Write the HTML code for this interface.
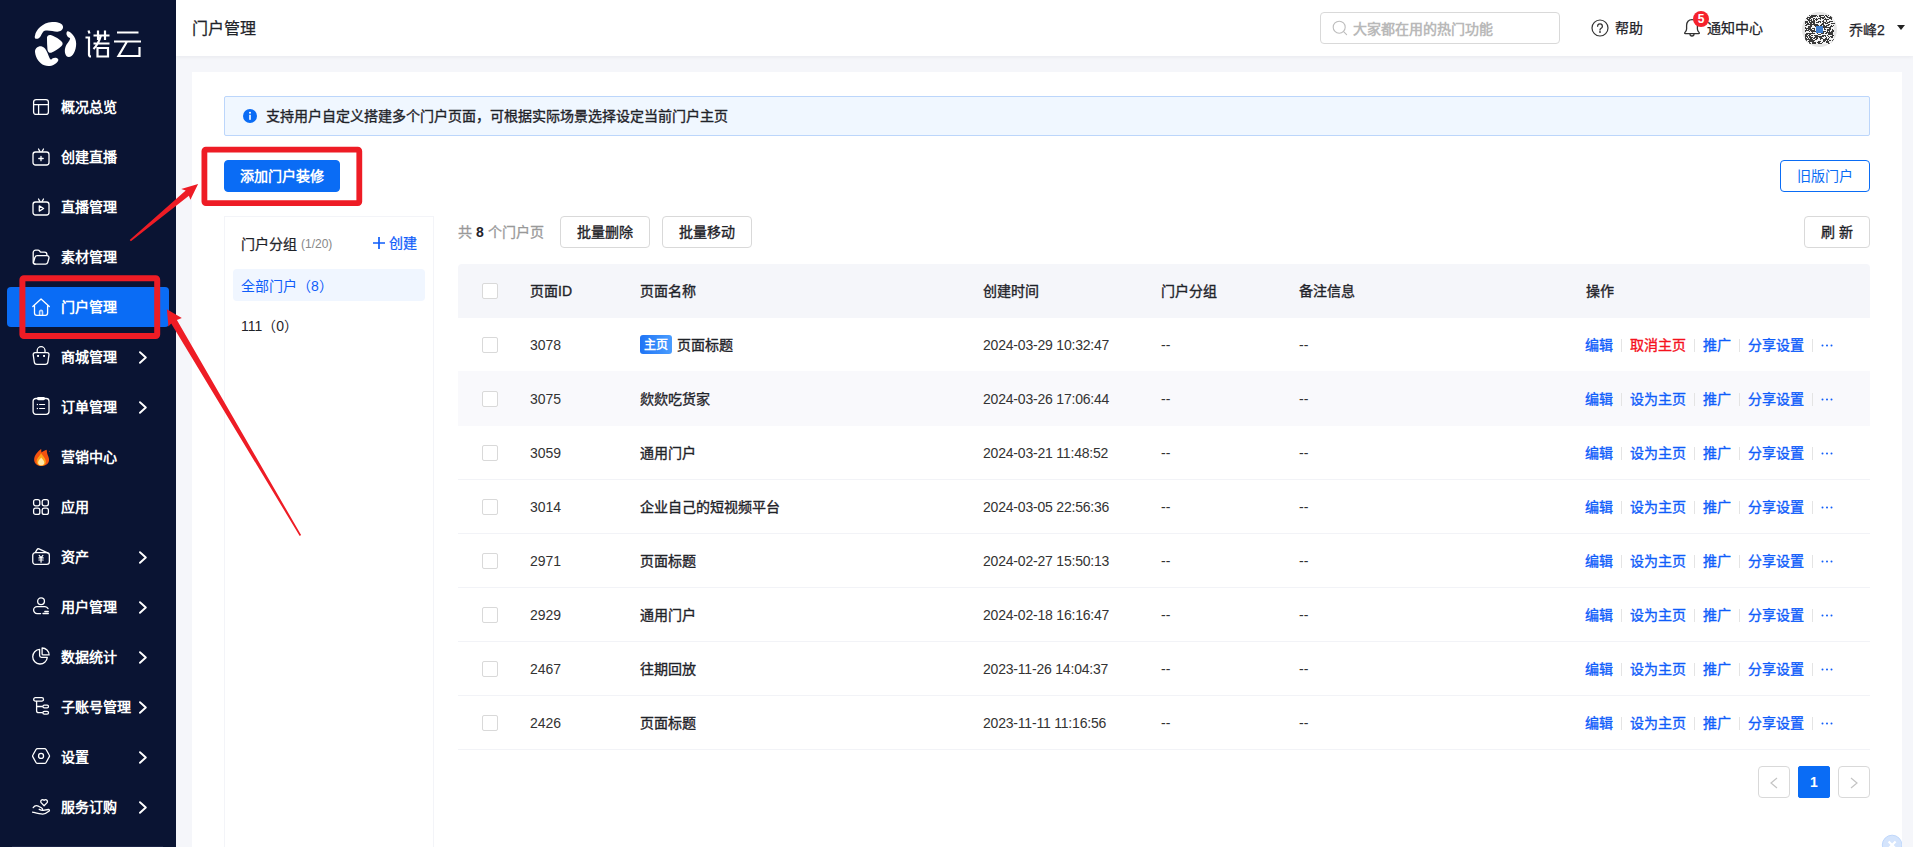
<!DOCTYPE html>
<html lang="zh-CN">
<head>
<meta charset="utf-8">
<title>门户管理</title>
<style>
*{box-sizing:border-box;margin:0;padding:0}
html,body{width:1913px;height:847px;overflow:hidden;background:#f5f6fa;font-family:"Liberation Sans",sans-serif;font-size:14px;color:#1f2329}
.abs{position:absolute}
#side{position:absolute;left:0;top:0;width:176px;height:847px;background:#0a1433;overflow:hidden}
.mi{position:absolute;left:7px;width:162px;height:40px;border-radius:4px;color:#fff;font-weight:bold;font-size:14px;line-height:40px;white-space:nowrap}
.mi.on{background:#0a6cf5}
.mi svg.ic{overflow:visible;position:absolute;left:25px;top:11px;width:18px;height:18px}
.mi span{position:absolute;left:54px;top:0}
.mi svg.ch{position:absolute;left:131px;top:14px;width:10px;height:13px}
#top{position:absolute;left:176px;top:0;width:1737px;height:56px;background:#fff;box-shadow:0 1px 4px rgba(0,21,41,.06)}
#card{position:absolute;left:192px;top:72px;width:1710px;height:775px;background:#fff}
.t{position:absolute;white-space:nowrap;line-height:20px}
.btn{position:absolute;height:32px;border:1px solid #d9d9d9;border-radius:4px;background:#fff;text-align:center;line-height:30px;font-size:14px;color:#1f2329;white-space:nowrap;overflow:hidden}
.row{position:absolute;left:458px;width:1412px;height:54px;border-bottom:1px solid #f2f3f7}
.row .t{top:17px}
.cb{position:absolute;left:24px;top:19px;width:16px;height:16px;border:1px solid #d9d9d9;border-radius:2px;background:#fff}
.lk{color:#0f5dfa;-webkit-text-stroke:.35px #0f5dfa}
.md{-webkit-text-stroke:.35px #1f2329}
.sep{position:absolute;top:21px;width:1px;height:13px;background:#e4e4e4}
</style>
</head>
<body>
<div id="side">
<svg class="abs" style="left:28px;top:14px" width="60" height="60" viewBox="0 0 847 847"><g fill="#fff">
<path d="M100 300C110 230 200 120 340 112C420 108 495 130 495 185C495 230 450 252 410 250C360 248 300 225 235 235C215 240 200 270 180 310C160 345 120 360 102 345C92 335 95 315 100 300Z"/>
<path d="M560 245C600 250 680 320 680 420C680 520 630 610 575 608C530 606 510 540 525 480C540 420 590 390 595 340C560 330 535 290 545 260C548 250 553 245 560 245Z"/>
<path d="M100 545C90 490 140 450 195 458C245 468 275 540 295 600C305 625 315 640 325 645C345 615 400 605 425 635C440 660 400 700 370 712C330 735 280 740 230 725C160 700 108 620 100 545Z"/>
<path d="M268 350C262 310 290 290 330 300C380 315 450 360 480 395C495 415 490 440 470 455C430 490 370 530 335 545C300 555 280 535 275 500C268 450 270 400 268 350Z"/>
</g></svg>
<svg class="abs" style="left:84px;top:29px" width="58" height="30" viewBox="0 0 58 30" fill="none" stroke="#fff" stroke-width="2.2" stroke-linecap="butt" stroke-linejoin="miter">
<path d="M1.5 8.5h3.5V25.5a2 2 0 0 0 2 2M4.5 1.5l1 3"/>
<path d="M9.5 6.5h16M14 1.5v9.5M21 1.5v9.5M9.5 14.5h16M17 6.5C15 13 12.5 17 9.5 20M13.5 19v8.5h10.5V19z"/>
<path d="M33 3.5h21.5M30 12.5h27M43 12.5L34.5 27H55.5V18"/>
</svg>
<div class="mi" style="top:87px"><svg class="ic" viewBox="0 0 18 18"><rect x="1.6" y="1.6" width="14.8" height="14.8" rx="2.5" stroke="#fff" stroke-width="1.3" fill="none" stroke-linecap="round" stroke-linejoin="round"/><path d="M1.6 6.6H16.4M6.6 6.6V16.4" stroke="#fff" stroke-width="1.3" fill="none" stroke-linecap="round" stroke-linejoin="round"/></svg><span>概况总览</span></div>
<div class="mi" style="top:137px"><svg class="ic" viewBox="0 0 18 18"><rect x="1" y="4" width="16" height="13" rx="2.5" stroke="#fff" stroke-width="1.3" fill="none" stroke-linecap="round" stroke-linejoin="round"/><path d="M6.5 1L8 3.6M11.5 1L10 3.6M9 8.3v4.4M6.8 10.5h4.4" stroke="#fff" stroke-width="1.3" fill="none" stroke-linecap="round" stroke-linejoin="round"/></svg><span>创建直播</span></div>
<div class="mi" style="top:187px"><svg class="ic" viewBox="0 0 18 18"><rect x="1" y="4" width="16" height="13" rx="2.5" stroke="#fff" stroke-width="1.3" fill="none" stroke-linecap="round" stroke-linejoin="round"/><path d="M6.5 1L8 3.6M11.5 1L10 3.6M7.3 7.9v5.2l4.3-2.6z" stroke="#fff" stroke-width="1.3" fill="none" stroke-linecap="round" stroke-linejoin="round"/></svg><span>直播管理</span></div>
<div class="mi" style="top:237px"><svg class="ic" viewBox="0 0 18 18"><path d="M14.9 7.4V6.6a2.4 2.4 0 0 0-2.4-2.4H9.3a1.5 1.5 0 0 1-1.1-.5L7.4 2.8a1.8 1.8 0 0 0-1.3-.6H3.6a2.4 2.4 0 0 0-2.4 2.4V14a2.1 2.1 0 0 0 2.1 2.1" stroke="#fff" stroke-width="1.3" fill="none" stroke-linecap="round" stroke-linejoin="round"/><path d="M3.3 16.1H13.6a2.2 2.2 0 0 0 2.1-1.6l1.2-4.2a2.1 2.1 0 0 0-2-2.7H5.2a2.3 2.3 0 0 0-2.2 1.7L1.5 14.2a1.5 1.5 0 0 0 1.8 1.9z" stroke="#fff" stroke-width="1.3" fill="none" stroke-linecap="round" stroke-linejoin="round"/></svg><span>素材管理</span></div>
<div class="mi on" style="top:287px"><svg class="ic" viewBox="0 0 18 18"><path d="M0.8 8.5L9.05 0.9 17.3 8.5M2.5 7.4V15a2.3 2.3 0 0 0 2.3 2.3H13.3a2.3 2.3 0 0 0 2.3-2.3V7.4" stroke="#fff" stroke-width="1.3" fill="none" stroke-linecap="round" stroke-linejoin="round"/><path d="M7.6 17.2V13.8a1.45 1.45 0 0 1 2.9 0V17.2" stroke="#fff" stroke-opacity=".75" stroke-width="1.6" fill="none"/></svg><span>门户管理</span></div>
<div class="mi" style="top:337px"><svg class="ic" viewBox="0 0 18 18"><path d="M3 4.6H15.2a1.8 1.8 0 0 1 1.8 2L15.9 14a2.6 2.6 0 0 1-2.6 2.4H4.9a2.6 2.6 0 0 1-2.6-2.4L1.2 6.6a1.8 1.8 0 0 1 1.8-2z" stroke="#fff" stroke-width="1.3" fill="none" stroke-linecap="round" stroke-linejoin="round"/><path d="M5.2 4.4V2.6a3.9 3.9 0 0 1 7.8 0V4.4" stroke="#fff" stroke-width="1.3" fill="none" stroke-linecap="round" stroke-linejoin="round"/><rect x="5.1" y="7" width="1.9" height="1.9" fill="#fff"/><rect x="11.1" y="7" width="1.9" height="1.9" fill="#fff"/></svg><span>商城管理</span><svg class="ch" viewBox="0 0 10 13"><path d="M2 1.2L7.8 6.5 2 11.8" stroke="#fff" stroke-width="1.9" fill="none" stroke-linecap="round" stroke-linejoin="round"/></svg></div>
<div class="mi" style="top:387px"><svg class="ic" viewBox="0 0 18 18"><rect x="1.1" y="0.5" width="15.9" height="15.9" rx="2.8" stroke="#fff" stroke-width="1.3" fill="none" stroke-linecap="round" stroke-linejoin="round"/><rect x="5" y="-0.9" width="8" height="3.1" rx="1.4" fill="#fff"/><path d="M7.6 6.5h5M7.6 10.5h5" stroke="#fff" stroke-width="1.2" fill="none" stroke-linecap="round"/><rect x="4.8" y="5.9" width="1.2" height="1.2" fill="#fff"/><rect x="4.8" y="9.9" width="1.2" height="1.2" fill="#fff"/></svg><span>订单管理</span><svg class="ch" viewBox="0 0 10 13"><path d="M2 1.2L7.8 6.5 2 11.8" stroke="#fff" stroke-width="1.9" fill="none" stroke-linecap="round" stroke-linejoin="round"/></svg></div>
<div class="mi" style="top:437px"><svg class="ic" viewBox="0 0 18 18"><path d="M9.2 1C7.5 2 3 6 2.2 10.5C1.6 14.5 4.5 18 9.4 18C14.5 18 17.5 14.8 17 11C16.6 8 15.2 6.5 15 4.5C14.9 3.2 14.9 2.4 14.5 1.7C13 2 10.5 3.5 9.4 4.6C9.2 3.5 9.4 2 9.2 1Z" fill="#f4520f"/><path d="M9 5C8.5 7.5 5 9.5 4.6 13C4.3 16 6.5 17.8 9.3 17.8C12.3 17.8 14.2 15.8 13.8 13C13.4 10 11 8 9.6 6Z" fill="#ffa31a"/><path d="M9.2 9.5C8.6 11 6.2 12 6.1 14.4C6 16.2 7.5 17.3 9.2 17.3C11 17.3 12.4 16.2 12.3 14.4C12.2 12.3 10 11 9.2 9.5Z" fill="#ffe9a8"/><circle cx="17.4" cy="3.3" r=".5" fill="#c43a12"/></svg><span>营销中心</span></div>
<div class="mi" style="top:487px"><svg class="ic" viewBox="0 0 18 18"><rect x="1.6" y="1.6" width="6.2" height="6.2" rx="2" stroke="#fff" stroke-width="1.3" fill="none" stroke-linecap="round" stroke-linejoin="round"/><rect x="10.2" y="1.6" width="6.2" height="6.2" rx="2" stroke="#fff" stroke-width="1.3" fill="none" stroke-linecap="round" stroke-linejoin="round"/><rect x="1.6" y="10.2" width="6.2" height="6.2" rx="2" stroke="#fff" stroke-width="1.3" fill="none" stroke-linecap="round" stroke-linejoin="round"/><rect x="10.2" y="10.2" width="6.2" height="6.2" rx="2" stroke="#fff" stroke-width="1.3" fill="none" stroke-linecap="round" stroke-linejoin="round"/></svg><span>应用</span></div>
<div class="mi" style="top:537px"><svg class="ic" viewBox="0 0 18 18"><rect x="0.75" y="4.6" width="16.6" height="11.8" rx="2.6" stroke="#fff" stroke-width="1.3" fill="none" stroke-linecap="round" stroke-linejoin="round"/><path d="M3.4 4.4L5 1.6a1.6 1.6 0 0 1 2-.7L15.6 4.8" stroke="#fff" stroke-width="1.3" fill="none" stroke-linecap="round" stroke-linejoin="round"/><path d="M7.2 7.4L9.05 9.6 10.9 7.4M9.05 9.6V14.2M6.9 9.9h4.3M6.9 12h4.3" stroke="#fff" stroke-width="1.2" fill="none" stroke-linecap="round"/></svg><span>资产</span><svg class="ch" viewBox="0 0 10 13"><path d="M2 1.2L7.8 6.5 2 11.8" stroke="#fff" stroke-width="1.9" fill="none" stroke-linecap="round" stroke-linejoin="round"/></svg></div>
<div class="mi" style="top:587px"><svg class="ic" viewBox="0 0 18 18"><circle cx="9.05" cy="3.3" r="3.4" stroke="#fff" stroke-width="1.3" fill="none" stroke-linecap="round" stroke-linejoin="round"/><path d="M16 10.6a3.4 3.4 0 0 0-3-2H5.1a3.5 3.5 0 0 0 0 7H8.6M12.8 13.5H16.3M11 15.5H16.3" stroke="#fff" stroke-width="1.3" fill="none" stroke-linecap="round" stroke-linejoin="round"/></svg><span>用户管理</span><svg class="ch" viewBox="0 0 10 13"><path d="M2 1.2L7.8 6.5 2 11.8" stroke="#fff" stroke-width="1.9" fill="none" stroke-linecap="round" stroke-linejoin="round"/></svg></div>
<div class="mi" style="top:637px"><svg class="ic" viewBox="0 0 18 18"><path d="M7.6 1.4A7.3 7.3 0 1 0 15.3 9.4H9.4a1.8 1.8 0 0 1-1.8-1.8z" stroke="#fff" stroke-width="1.3" fill="none" stroke-linecap="round" stroke-linejoin="round"/><path d="M10.1 0a7 7 0 0 1 7 6.9H11.1a1 1 0 0 1-1-1z" stroke="#fff" stroke-width="1.3" fill="none" stroke-linecap="round" stroke-linejoin="round"/></svg><span>数据统计</span><svg class="ch" viewBox="0 0 10 13"><path d="M2 1.2L7.8 6.5 2 11.8" stroke="#fff" stroke-width="1.9" fill="none" stroke-linecap="round" stroke-linejoin="round"/></svg></div>
<div class="mi" style="top:687px"><svg class="ic" viewBox="0 0 18 18"><rect x="1.7" y="-0.3" width="9.8" height="3.4" rx="1.7" stroke="#fff" stroke-width="1.3" fill="none" stroke-linecap="round" stroke-linejoin="round"/><rect x="10.9" y="7.2" width="5.6" height="2.7" rx="1.35" stroke="#fff" stroke-width="1.3" fill="none" stroke-linecap="round" stroke-linejoin="round"/><rect x="10.9" y="13.4" width="5.6" height="2.8" rx="1.4" stroke="#fff" stroke-width="1.3" fill="none" stroke-linecap="round" stroke-linejoin="round"/><path d="M4.6 3.3v9.4a2 2 0 0 0 2 2h3.7M4.6 8.5h5.7" stroke="#fff" stroke-width="1.3" fill="none" stroke-linecap="round" stroke-linejoin="round"/></svg><span>子账号管理</span><svg class="ch" viewBox="0 0 10 13"><path d="M2 1.2L7.8 6.5 2 11.8" stroke="#fff" stroke-width="1.9" fill="none" stroke-linecap="round" stroke-linejoin="round"/></svg></div>
<div class="mi" style="top:737px"><svg class="ic" viewBox="0 0 18 18"><path d="M5.6 0.55H12.5a1.8 1.8 0 0 1 1.6.9L17.2 7a1.8 1.8 0 0 1 0 1.9L14.1 14.5a1.8 1.8 0 0 1-1.6.9H5.6a1.8 1.8 0 0 1-1.6-.9L0.9 8.9a1.8 1.8 0 0 1 0-1.9L4 1.45a1.8 1.8 0 0 1 1.6-.9z" stroke="#fff" stroke-width="1.3" fill="none" stroke-linecap="round" stroke-linejoin="round"/><circle cx="9.05" cy="7.95" r="2.5" stroke="#fff" stroke-width="1.3" fill="none" stroke-linecap="round" stroke-linejoin="round"/></svg><span>设置</span><svg class="ch" viewBox="0 0 10 13"><path d="M2 1.2L7.8 6.5 2 11.8" stroke="#fff" stroke-width="1.9" fill="none" stroke-linecap="round" stroke-linejoin="round"/></svg></div>
<div class="mi" style="top:787px"><svg class="ic" viewBox="0 0 18 18"><path d="M12.1 7.7L9.3 4.9a1.9 1.9 0 0 1 2.7-2.7l.1.1.1-.1a1.9 1.9 0 0 1 2.7 2.7z" stroke="#fff" stroke-width="1.3" fill="none" stroke-linecap="round" stroke-linejoin="round"/><path d="M1.2 9.6C2.6 7.6 4.8 7.4 6.4 8.2L9.4 9.8C10.4 10.4 10.8 11.2 10.6 12" stroke="#fff" stroke-width="1.3" fill="none" stroke-linecap="round" stroke-linejoin="round"/><path d="M7.2 11.3C8.4 11.9 9.6 12.4 11 12.3L16.4 11.5a.9.9 0 0 1 .8 1.5C15.2 14.6 13 16 10.8 16.1C8 16.2 4 15 0.6 14.1" stroke="#fff" stroke-width="1.3" fill="none" stroke-linecap="round" stroke-linejoin="round"/></svg><span>服务订购</span><svg class="ch" viewBox="0 0 10 13"><path d="M2 1.2L7.8 6.5 2 11.8" stroke="#fff" stroke-width="1.9" fill="none" stroke-linecap="round" stroke-linejoin="round"/></svg></div>
<div class="abs" style="left:12px;top:846px;width:151px;height:1px;background:#1c2446"></div>
</div>
<div id="top">
<div class="t" style="left:16px;top:19px;font-size:16px;color:#1f2329;line-height:20px;font-weight:normal;-webkit-text-stroke:.25px #1f2329">门户管理</div>
<div class="abs" style="left:1144px;top:12px;width:240px;height:32px;border:1px solid #d9d9d9;border-radius:4px;background:#fff"></div>
<svg class="abs" style="left:1156px;top:20px" width="16" height="16" viewBox="0 0 16 16"><circle cx="7.2" cy="7.2" r="6" stroke="#bdbdbd" stroke-width="1.1" fill="none"/><path d="M11.6 11.6l3 3" stroke="#bdbdbd" stroke-width="1.1" stroke-linecap="round"/></svg>
<div class="t" style="left:1177px;top:19px;color:#b9b9b9;font-weight:bold">大家都在用的热门功能</div>
<svg class="abs" style="left:1415px;top:19px" width="18" height="18" viewBox="0 0 18 18"><circle cx="9" cy="9" r="8" stroke="#333" stroke-width="1.2" fill="none"/><path d="M6.6 7.2a2.4 2.4 0 1 1 3.6 2.1c-.8.5-1.2.9-1.2 1.7" stroke="#333" stroke-width="1.3" fill="none" stroke-linecap="round"/><circle cx="9" cy="13" r=".9" fill="#333"/></svg>
<div class="t" style="left:1439px;top:18px;color:#1f2329;font-weight:normal;-webkit-text-stroke:.25px #1f2329">帮助</div>
<svg class="abs" style="left:1507px;top:18px" width="18" height="20" viewBox="0 0 18 20"><path d="M9 1.6C5.6 1.6 3.6 4.2 3.6 7.4V11C3.6 12.8 2.6 13.8 1.8 14.6C1.4 15 1.6 15.7 2.3 15.7H15.7C16.4 15.7 16.6 15 16.2 14.6C15.4 13.8 14.4 12.8 14.4 11V7.4C14.4 4.2 12.4 1.6 9 1.6Z" stroke="#333" stroke-width="1.3" fill="none" stroke-linejoin="round"/><path d="M7 16a2 2 0 0 0 4 0" stroke="#333" stroke-width="1.3" fill="none"/></svg>
<div class="abs" style="left:1517px;top:11px;width:16px;height:16px;border-radius:8px;background:#f5222d;color:#fff;font-size:12px;font-weight:bold;line-height:16px;text-align:center">5</div>
<div class="t" style="left:1531px;top:18px;color:#1f2329;font-weight:normal;-webkit-text-stroke:.25px #1f2329">通知中心</div>
<svg class="abs" style="left:1626px;top:12px" width="35" height="35" viewBox="0 0 35 35"><defs><clipPath id="av"><circle cx="17.5" cy="17.5" r="17.5"/></clipPath></defs><g clip-path="url(#av)"><rect width="35" height="35" fill="#e6e6e6"/><rect x="3" y="3" width="29" height="29" fill="#f4f4f4"/><path fill="#3a3a3a" d="M7 3h1v1h-1zM9 3h1v1h-1zM10 3h2v1h-2zM12 3h1v1h-1zM13 3h2v1h-2zM17 3h2v1h-2zM19 3h1v1h-1zM20 3h1v1h-1zM21 3h1v1h-1zM23 3h1v1h-1zM24 3h1v1h-1zM26 3h1v1h-1zM31 3h2v1h-2zM4 4h1v1h-1zM5 4h1v1h-1zM8 4h1v1h-1zM9 4h2v1h-2zM11 4h1v1h-1zM12 4h2v1h-2zM15 4h1v1h-1zM17 4h2v1h-2zM22 4h1v1h-1zM24 4h2v1h-2zM28 4h1v1h-1zM29 4h2v1h-2zM31 4h1v1h-1zM5 5h2v1h-2zM7 5h2v1h-2zM9 5h2v1h-2zM18 5h1v1h-1zM19 5h1v1h-1zM20 5h1v1h-1zM21 5h1v1h-1zM22 5h1v1h-1zM25 5h1v1h-1zM26 5h2v1h-2zM28 5h2v1h-2zM30 5h2v1h-2zM4 6h2v1h-2zM7 6h1v1h-1zM8 6h1v1h-1zM11 6h2v1h-2zM14 6h1v1h-1zM16 6h2v1h-2zM18 6h1v1h-1zM20 6h1v1h-1zM21 6h1v1h-1zM23 6h1v1h-1zM27 6h1v1h-1zM28 6h1v1h-1zM29 6h1v1h-1zM5 7h1v1h-1zM6 7h2v1h-2zM9 7h1v1h-1zM11 7h1v1h-1zM13 7h1v1h-1zM14 7h1v1h-1zM15 7h1v1h-1zM18 7h1v1h-1zM22 7h1v1h-1zM23 7h1v1h-1zM24 7h1v1h-1zM25 7h2v1h-2zM29 7h1v1h-1zM6 8h1v1h-1zM7 8h1v1h-1zM8 8h1v1h-1zM9 8h1v1h-1zM11 8h1v1h-1zM12 8h1v1h-1zM14 8h1v1h-1zM21 8h1v1h-1zM24 8h1v1h-1zM3 9h1v1h-1zM4 9h1v1h-1zM5 9h1v1h-1zM7 9h1v1h-1zM9 9h2v1h-2zM11 9h2v1h-2zM16 9h1v1h-1zM17 9h2v1h-2zM20 9h2v1h-2zM24 9h1v1h-1zM27 9h1v1h-1zM28 9h2v1h-2zM30 9h1v1h-1zM3 10h2v1h-2zM5 10h1v1h-1zM7 10h1v1h-1zM8 10h2v1h-2zM10 10h1v1h-1zM11 10h1v1h-1zM12 10h1v1h-1zM14 10h1v1h-1zM15 10h1v1h-1zM16 10h1v1h-1zM18 10h1v1h-1zM21 10h1v1h-1zM22 10h1v1h-1zM23 10h1v1h-1zM25 10h1v1h-1zM26 10h1v1h-1zM27 10h1v1h-1zM3 11h1v1h-1zM5 11h1v1h-1zM6 11h1v1h-1zM8 11h1v1h-1zM9 11h1v1h-1zM11 11h1v1h-1zM12 11h1v1h-1zM20 11h1v1h-1zM21 11h1v1h-1zM23 11h1v1h-1zM24 11h1v1h-1zM25 11h1v1h-1zM29 11h1v1h-1zM30 11h1v1h-1zM31 11h2v1h-2zM4 12h1v1h-1zM5 12h1v1h-1zM6 12h1v1h-1zM7 12h2v1h-2zM9 12h1v1h-1zM10 12h1v1h-1zM11 12h1v1h-1zM12 12h1v1h-1zM13 12h1v1h-1zM14 12h1v1h-1zM15 12h1v1h-1zM19 12h2v1h-2zM21 12h1v1h-1zM26 12h1v1h-1zM27 12h1v1h-1zM3 13h1v1h-1zM4 13h1v1h-1zM8 13h2v1h-2zM12 13h1v1h-1zM13 13h2v1h-2zM15 13h2v1h-2zM18 13h1v1h-1zM19 13h1v1h-1zM21 13h1v1h-1zM22 13h1v1h-1zM24 13h2v1h-2zM26 13h1v1h-1zM29 13h1v1h-1zM31 13h1v1h-1zM6 14h2v1h-2zM8 14h1v1h-1zM9 14h1v1h-1zM13 14h1v1h-1zM14 14h2v1h-2zM16 14h1v1h-1zM19 14h2v1h-2zM21 14h1v1h-1zM22 14h2v1h-2zM24 14h1v1h-1zM28 14h1v1h-1zM29 14h1v1h-1zM30 14h1v1h-1zM3 15h1v1h-1zM6 15h1v1h-1zM7 15h1v1h-1zM8 15h1v1h-1zM16 15h2v1h-2zM19 15h1v1h-1zM20 15h1v1h-1zM21 15h2v1h-2zM23 15h1v1h-1zM24 15h1v1h-1zM25 15h1v1h-1zM26 15h2v1h-2zM28 15h1v1h-1zM3 16h2v1h-2zM5 16h1v1h-1zM6 16h1v1h-1zM7 16h1v1h-1zM8 16h1v1h-1zM10 16h2v1h-2zM12 16h1v1h-1zM14 16h2v1h-2zM16 16h1v1h-1zM17 16h1v1h-1zM18 16h1v1h-1zM19 16h2v1h-2zM22 16h1v1h-1zM27 16h2v1h-2zM4 17h1v1h-1zM6 17h2v1h-2zM8 17h1v1h-1zM9 17h1v1h-1zM12 17h1v1h-1zM15 17h1v1h-1zM16 17h1v1h-1zM17 17h1v1h-1zM19 17h1v1h-1zM22 17h1v1h-1zM23 17h1v1h-1zM25 17h1v1h-1zM26 17h1v1h-1zM27 17h2v1h-2zM30 17h1v1h-1zM3 18h2v1h-2zM5 18h2v1h-2zM8 18h1v1h-1zM9 18h1v1h-1zM10 18h1v1h-1zM11 18h1v1h-1zM12 18h1v1h-1zM15 18h1v1h-1zM18 18h1v1h-1zM19 18h1v1h-1zM20 18h1v1h-1zM25 18h1v1h-1zM26 18h2v1h-2zM30 18h1v1h-1zM31 18h1v1h-1zM3 19h1v1h-1zM7 19h1v1h-1zM9 19h2v1h-2zM11 19h2v1h-2zM13 19h2v1h-2zM16 19h2v1h-2zM18 19h2v1h-2zM20 19h2v1h-2zM22 19h1v1h-1zM23 19h1v1h-1zM25 19h1v1h-1zM27 19h1v1h-1zM29 19h1v1h-1zM30 19h1v1h-1zM31 19h1v1h-1zM10 20h1v1h-1zM14 20h2v1h-2zM16 20h1v1h-1zM19 20h1v1h-1zM20 20h1v1h-1zM21 20h1v1h-1zM24 20h1v1h-1zM25 20h1v1h-1zM26 20h2v1h-2zM28 20h2v1h-2zM30 20h1v1h-1zM4 21h1v1h-1zM5 21h1v1h-1zM6 21h1v1h-1zM7 21h1v1h-1zM8 21h1v1h-1zM9 21h1v1h-1zM10 21h2v1h-2zM12 21h1v1h-1zM15 21h1v1h-1zM19 21h1v1h-1zM20 21h1v1h-1zM21 21h1v1h-1zM23 21h1v1h-1zM24 21h1v1h-1zM26 21h1v1h-1zM27 21h1v1h-1zM28 21h1v1h-1zM29 21h1v1h-1zM30 21h1v1h-1zM3 22h1v1h-1zM4 22h1v1h-1zM5 22h1v1h-1zM7 22h2v1h-2zM16 22h1v1h-1zM17 22h1v1h-1zM18 22h1v1h-1zM26 22h2v1h-2zM28 22h1v1h-1zM29 22h1v1h-1zM30 22h1v1h-1zM3 23h2v1h-2zM6 23h1v1h-1zM7 23h1v1h-1zM9 23h1v1h-1zM10 23h1v1h-1zM12 23h2v1h-2zM14 23h2v1h-2zM20 23h1v1h-1zM21 23h1v1h-1zM22 23h1v1h-1zM23 23h1v1h-1zM25 23h1v1h-1zM30 23h2v1h-2zM3 24h1v1h-1zM4 24h2v1h-2zM7 24h2v1h-2zM13 24h2v1h-2zM15 24h1v1h-1zM16 24h2v1h-2zM18 24h2v1h-2zM20 24h1v1h-1zM21 24h1v1h-1zM23 24h1v1h-1zM26 24h1v1h-1zM28 24h1v1h-1zM29 24h2v1h-2zM3 25h1v1h-1zM5 25h1v1h-1zM7 25h2v1h-2zM9 25h2v1h-2zM12 25h1v1h-1zM13 25h1v1h-1zM14 25h2v1h-2zM17 25h2v1h-2zM19 25h1v1h-1zM24 25h1v1h-1zM27 25h1v1h-1zM29 25h1v1h-1zM30 25h1v1h-1zM3 26h1v1h-1zM4 26h1v1h-1zM6 26h1v1h-1zM8 26h2v1h-2zM11 26h1v1h-1zM12 26h1v1h-1zM14 26h1v1h-1zM15 26h1v1h-1zM18 26h1v1h-1zM19 26h2v1h-2zM23 26h2v1h-2zM26 26h1v1h-1zM3 27h2v1h-2zM5 27h1v1h-1zM6 27h1v1h-1zM7 27h1v1h-1zM8 27h1v1h-1zM9 27h1v1h-1zM10 27h1v1h-1zM13 27h1v1h-1zM14 27h1v1h-1zM18 27h1v1h-1zM21 27h2v1h-2zM23 27h2v1h-2zM25 27h1v1h-1zM26 27h1v1h-1zM31 27h1v1h-1zM3 28h1v1h-1zM4 28h1v1h-1zM7 28h1v1h-1zM8 28h2v1h-2zM10 28h1v1h-1zM11 28h2v1h-2zM21 28h1v1h-1zM22 28h1v1h-1zM23 28h1v1h-1zM25 28h1v1h-1zM27 28h1v1h-1zM28 28h1v1h-1zM30 28h2v1h-2zM3 29h1v1h-1zM4 29h1v1h-1zM6 29h1v1h-1zM7 29h1v1h-1zM8 29h1v1h-1zM9 29h1v1h-1zM10 29h1v1h-1zM11 29h1v1h-1zM16 29h1v1h-1zM17 29h1v1h-1zM18 29h1v1h-1zM21 29h1v1h-1zM22 29h1v1h-1zM24 29h1v1h-1zM25 29h2v1h-2zM30 29h1v1h-1zM3 30h1v1h-1zM5 30h1v1h-1zM7 30h1v1h-1zM10 30h1v1h-1zM11 30h1v1h-1zM12 30h1v1h-1zM13 30h1v1h-1zM15 30h1v1h-1zM16 30h1v1h-1zM17 30h1v1h-1zM20 30h1v1h-1zM24 30h1v1h-1zM25 30h1v1h-1zM26 30h1v1h-1zM29 30h1v1h-1zM3 31h1v1h-1zM4 31h1v1h-1zM7 31h2v1h-2zM10 31h1v1h-1zM11 31h2v1h-2zM13 31h1v1h-1zM16 31h1v1h-1zM17 31h1v1h-1zM18 31h2v1h-2zM26 31h1v1h-1zM27 31h1v1h-1zM30 31h1v1h-1zM31 31h2v1h-2z"/><rect x="14" y="14" width="7" height="7" fill="#3f7fd0"/></g></svg>
<div class="t" style="left:1673px;top:20px;color:#1f2329;font-weight:normal;-webkit-text-stroke:.25px #1f2329">乔峰2</div>
<div class="abs" style="left:1721px;top:25px;width:0;height:0;border-left:4.5px solid transparent;border-right:4.5px solid transparent;border-top:5.5px solid #222"></div>
</div>
<div id="card"></div>
<div id="main">
<div class="abs" style="left:224px;top:96px;width:1646px;height:40px;background:#f0f7ff;border:1px solid #bcd6fb;border-radius:2px"></div>
<svg class="abs" style="left:243px;top:109px" width="14" height="14" viewBox="0 0 14 14"><circle cx="7" cy="7" r="7" fill="#0a6cf5"/><circle cx="7" cy="3.8" r="1" fill="#fff"/><rect x="6.2" y="5.8" width="1.6" height="5" fill="#fff"/></svg>
<div class="t" style="left:266px;top:106px;font-weight:normal;-webkit-text-stroke:.35px #1f2329;color:#1f2329">支持用户自定义搭建多个门户页面，可根据实际场景选择设定当前门户主页</div>
<div class="btn" style="left:224px;top:160px;width:116px;background:#0a6cf5;border-color:#0a6cf5;color:#fff;font-weight:bold">添加门户装修</div>
<div class="btn" style="left:1780px;top:160px;width:90px;border-color:#0a6cf5;color:#0a6cf5">旧版门户</div>
<div class="abs" style="left:224px;top:216px;width:210px;height:640px;border:1px solid #f3f4f8"></div>
<div class="t" style="left:241px;top:234px;font-weight:normal;-webkit-text-stroke:.25px #1f2329">门户分组</div>
<div class="t" style="left:301px;top:234px;font-size:12px;color:#888">(1/20)</div>
<svg class="abs" style="left:373px;top:237px" width="12" height="12" viewBox="0 0 12 12"><path d="M6 0v12M0 6h12" stroke="#0f5dfa" stroke-width="1.7"/></svg>
<div class="t lk" style="left:389px;top:233px;font-weight:normal;-webkit-text-stroke:.25px #0f5dfa">创建</div>
<div class="abs" style="left:233px;top:269px;width:192px;height:32px;background:#f0f6ff;border-radius:4px"></div>
<div class="t" style="left:241px;top:276px;color:#0f5dfa">全部门户（8）</div>
<div class="t" style="left:241px;top:316px">111（0）</div>
<div class="t" style="left:458px;top:222px;color:#999;-webkit-text-stroke:.3px #999">共 <b style="color:#1f2329;-webkit-text-stroke:0">8</b> 个门户页</div>
<div class="btn" style="left:560px;top:216px;width:90px" ><span class="md">批量删除</span></div>
<div class="btn" style="left:662px;top:216px;width:90px" ><span class="md">批量移动</span></div>
<div class="btn" style="left:1804px;top:216px;width:66px"><span class="md">刷 新</span></div>
<div class="row" style="top:264px;background:#f5f6fa;border-bottom:none;border-radius:4px 4px 0 0;font-weight:normal;-webkit-text-stroke:.35px #1f2329"><div class="cb"></div><div class="t" style="left:72px">页面ID</div><div class="t" style="left:182px">页面名称</div><div class="t" style="left:525px">创建时间</div><div class="t" style="left:703px">门户分组</div><div class="t" style="left:841px">备注信息</div><div class="t" style="left:1128px">操作</div></div>
<div class="row" style="top:318px;border-bottom-color:#f9f9fc;"><div class="cb"></div><div class="t" style="left:72px;color:#333">3078</div><div class="abs" style="left:182px;top:17px;width:32px;height:19px;border-radius:3px;background:linear-gradient(90deg,#1f74f5,#4a9dff);color:#fff;font-size:12px;font-weight:bold;line-height:21px;text-align:center">主页</div><div class="t md" style="left:219px">页面标题</div><div class="t" style="left:525px;color:#333;letter-spacing:-.2px">2024-03-29 10:32:47</div><div class="t" style="left:703px;color:#333">--</div><div class="t" style="left:841px;color:#333">--</div><div class="t lk" style="left:1127px">编辑</div><div class="sep" style="left:1163px"></div><div class="t lk" style="left:1172px;color:#f5121d;-webkit-text-stroke-color:#f5121d">取消主页</div><div class="sep" style="left:1236px"></div><div class="t lk" style="left:1245px">推广</div><div class="sep" style="left:1281px"></div><div class="t lk" style="left:1290px">分享设置</div><div class="sep" style="left:1354px"></div><svg class="abs" style="left:1363px;top:26px" width="12" height="3" viewBox="0 0 12 3"><circle cx="1.5" cy="1.5" r="1" fill="#0f5dfa"/><circle cx="6" cy="1.5" r="1" fill="#0f5dfa"/><circle cx="10.5" cy="1.5" r="1" fill="#0f5dfa"/></svg></div>
<div class="row" style="top:372px;background:#f9f9fc;border-bottom-color:#f9f9fc;"><div class="cb"></div><div class="t" style="left:72px;color:#333">3075</div><div class="t md" style="left:182px">欻欻吃货家</div><div class="t" style="left:525px;color:#333;letter-spacing:-.2px">2024-03-26 17:06:44</div><div class="t" style="left:703px;color:#333">--</div><div class="t" style="left:841px;color:#333">--</div><div class="t lk" style="left:1127px">编辑</div><div class="sep" style="left:1163px"></div><div class="t lk" style="left:1172px">设为主页</div><div class="sep" style="left:1236px"></div><div class="t lk" style="left:1245px">推广</div><div class="sep" style="left:1281px"></div><div class="t lk" style="left:1290px">分享设置</div><div class="sep" style="left:1354px"></div><svg class="abs" style="left:1363px;top:26px" width="12" height="3" viewBox="0 0 12 3"><circle cx="1.5" cy="1.5" r="1" fill="#0f5dfa"/><circle cx="6" cy="1.5" r="1" fill="#0f5dfa"/><circle cx="10.5" cy="1.5" r="1" fill="#0f5dfa"/></svg></div>
<div class="row" style="top:426px;"><div class="cb"></div><div class="t" style="left:72px;color:#333">3059</div><div class="t md" style="left:182px">通用门户</div><div class="t" style="left:525px;color:#333;letter-spacing:-.2px">2024-03-21 11:48:52</div><div class="t" style="left:703px;color:#333">--</div><div class="t" style="left:841px;color:#333">--</div><div class="t lk" style="left:1127px">编辑</div><div class="sep" style="left:1163px"></div><div class="t lk" style="left:1172px">设为主页</div><div class="sep" style="left:1236px"></div><div class="t lk" style="left:1245px">推广</div><div class="sep" style="left:1281px"></div><div class="t lk" style="left:1290px">分享设置</div><div class="sep" style="left:1354px"></div><svg class="abs" style="left:1363px;top:26px" width="12" height="3" viewBox="0 0 12 3"><circle cx="1.5" cy="1.5" r="1" fill="#0f5dfa"/><circle cx="6" cy="1.5" r="1" fill="#0f5dfa"/><circle cx="10.5" cy="1.5" r="1" fill="#0f5dfa"/></svg></div>
<div class="row" style="top:480px;"><div class="cb"></div><div class="t" style="left:72px;color:#333">3014</div><div class="t md" style="left:182px">企业自己的短视频平台</div><div class="t" style="left:525px;color:#333;letter-spacing:-.2px">2024-03-05 22:56:36</div><div class="t" style="left:703px;color:#333">--</div><div class="t" style="left:841px;color:#333">--</div><div class="t lk" style="left:1127px">编辑</div><div class="sep" style="left:1163px"></div><div class="t lk" style="left:1172px">设为主页</div><div class="sep" style="left:1236px"></div><div class="t lk" style="left:1245px">推广</div><div class="sep" style="left:1281px"></div><div class="t lk" style="left:1290px">分享设置</div><div class="sep" style="left:1354px"></div><svg class="abs" style="left:1363px;top:26px" width="12" height="3" viewBox="0 0 12 3"><circle cx="1.5" cy="1.5" r="1" fill="#0f5dfa"/><circle cx="6" cy="1.5" r="1" fill="#0f5dfa"/><circle cx="10.5" cy="1.5" r="1" fill="#0f5dfa"/></svg></div>
<div class="row" style="top:534px;"><div class="cb"></div><div class="t" style="left:72px;color:#333">2971</div><div class="t md" style="left:182px">页面标题</div><div class="t" style="left:525px;color:#333;letter-spacing:-.2px">2024-02-27 15:50:13</div><div class="t" style="left:703px;color:#333">--</div><div class="t" style="left:841px;color:#333">--</div><div class="t lk" style="left:1127px">编辑</div><div class="sep" style="left:1163px"></div><div class="t lk" style="left:1172px">设为主页</div><div class="sep" style="left:1236px"></div><div class="t lk" style="left:1245px">推广</div><div class="sep" style="left:1281px"></div><div class="t lk" style="left:1290px">分享设置</div><div class="sep" style="left:1354px"></div><svg class="abs" style="left:1363px;top:26px" width="12" height="3" viewBox="0 0 12 3"><circle cx="1.5" cy="1.5" r="1" fill="#0f5dfa"/><circle cx="6" cy="1.5" r="1" fill="#0f5dfa"/><circle cx="10.5" cy="1.5" r="1" fill="#0f5dfa"/></svg></div>
<div class="row" style="top:588px;"><div class="cb"></div><div class="t" style="left:72px;color:#333">2929</div><div class="t md" style="left:182px">通用门户</div><div class="t" style="left:525px;color:#333;letter-spacing:-.2px">2024-02-18 16:16:47</div><div class="t" style="left:703px;color:#333">--</div><div class="t" style="left:841px;color:#333">--</div><div class="t lk" style="left:1127px">编辑</div><div class="sep" style="left:1163px"></div><div class="t lk" style="left:1172px">设为主页</div><div class="sep" style="left:1236px"></div><div class="t lk" style="left:1245px">推广</div><div class="sep" style="left:1281px"></div><div class="t lk" style="left:1290px">分享设置</div><div class="sep" style="left:1354px"></div><svg class="abs" style="left:1363px;top:26px" width="12" height="3" viewBox="0 0 12 3"><circle cx="1.5" cy="1.5" r="1" fill="#0f5dfa"/><circle cx="6" cy="1.5" r="1" fill="#0f5dfa"/><circle cx="10.5" cy="1.5" r="1" fill="#0f5dfa"/></svg></div>
<div class="row" style="top:642px;"><div class="cb"></div><div class="t" style="left:72px;color:#333">2467</div><div class="t md" style="left:182px">往期回放</div><div class="t" style="left:525px;color:#333;letter-spacing:-.2px">2023-11-26 14:04:37</div><div class="t" style="left:703px;color:#333">--</div><div class="t" style="left:841px;color:#333">--</div><div class="t lk" style="left:1127px">编辑</div><div class="sep" style="left:1163px"></div><div class="t lk" style="left:1172px">设为主页</div><div class="sep" style="left:1236px"></div><div class="t lk" style="left:1245px">推广</div><div class="sep" style="left:1281px"></div><div class="t lk" style="left:1290px">分享设置</div><div class="sep" style="left:1354px"></div><svg class="abs" style="left:1363px;top:26px" width="12" height="3" viewBox="0 0 12 3"><circle cx="1.5" cy="1.5" r="1" fill="#0f5dfa"/><circle cx="6" cy="1.5" r="1" fill="#0f5dfa"/><circle cx="10.5" cy="1.5" r="1" fill="#0f5dfa"/></svg></div>
<div class="row" style="top:696px;"><div class="cb"></div><div class="t" style="left:72px;color:#333">2426</div><div class="t md" style="left:182px">页面标题</div><div class="t" style="left:525px;color:#333;letter-spacing:-.2px">2023-11-11 11:16:56</div><div class="t" style="left:703px;color:#333">--</div><div class="t" style="left:841px;color:#333">--</div><div class="t lk" style="left:1127px">编辑</div><div class="sep" style="left:1163px"></div><div class="t lk" style="left:1172px">设为主页</div><div class="sep" style="left:1236px"></div><div class="t lk" style="left:1245px">推广</div><div class="sep" style="left:1281px"></div><div class="t lk" style="left:1290px">分享设置</div><div class="sep" style="left:1354px"></div><svg class="abs" style="left:1363px;top:26px" width="12" height="3" viewBox="0 0 12 3"><circle cx="1.5" cy="1.5" r="1" fill="#0f5dfa"/><circle cx="6" cy="1.5" r="1" fill="#0f5dfa"/><circle cx="10.5" cy="1.5" r="1" fill="#0f5dfa"/></svg></div>
<div class="btn" style="left:1758px;top:766px;width:32px"><svg width="10" height="12" viewBox="0 0 10 12" style="margin-top:10px"><path d="M8 1L2 6l6 5" stroke="#c4c4c4" stroke-width="1.2" fill="none"/></svg></div>
<div class="btn" style="left:1798px;top:766px;width:32px;background:#0a6cf5;border-color:#0a6cf5;color:#fff;font-weight:bold;border-radius:2px">1</div>
<div class="btn" style="left:1838px;top:766px;width:32px"><svg width="10" height="12" viewBox="0 0 10 12" style="margin-top:10px"><path d="M2 1l6 5-6 5" stroke="#c4c4c4" stroke-width="1.2" fill="none"/></svg></div>
<svg class="abs" style="left:1881px;top:834px" width="21" height="13" viewBox="0 0 21 13"><circle cx="11.1" cy="11" r="9.8" fill="#d4e4fc" stroke="#bfd7fb" stroke-width="1"/><path d="M7.6 7.5l7 7M14.6 7.5l-7 7" stroke="#fff" stroke-width="2.2"/></svg>
</div>
<div id="anno">
<svg class="abs" style="left:0;top:0" width="1913" height="847" viewBox="0 0 1913 847">
<rect x="204.4" y="149.7" width="154.9" height="53.4" rx="1.5" stroke="#ee1c25" stroke-width="5.8" fill="none" stroke-linejoin="round"/>
<rect x="22.4" y="278.2" width="134.8" height="57.8" rx="1.5" stroke="#ee1c25" stroke-width="6" fill="none" stroke-linejoin="round"/>
<path d="M129.7 240.1L185.7 190.5 181.2 188.9 198.1 184 190.4 199.7 188.9 195.8 130.9 241.3z" fill="#ee1c25"/>
<path d="M301.1 535.1L176.9 320 181.8 318.1 166.9 309.2 168.4 326.6 171.2 323.5 299.7 535.9z" fill="#ee1c25"/>
</svg>
</div>
</body>
</html>
